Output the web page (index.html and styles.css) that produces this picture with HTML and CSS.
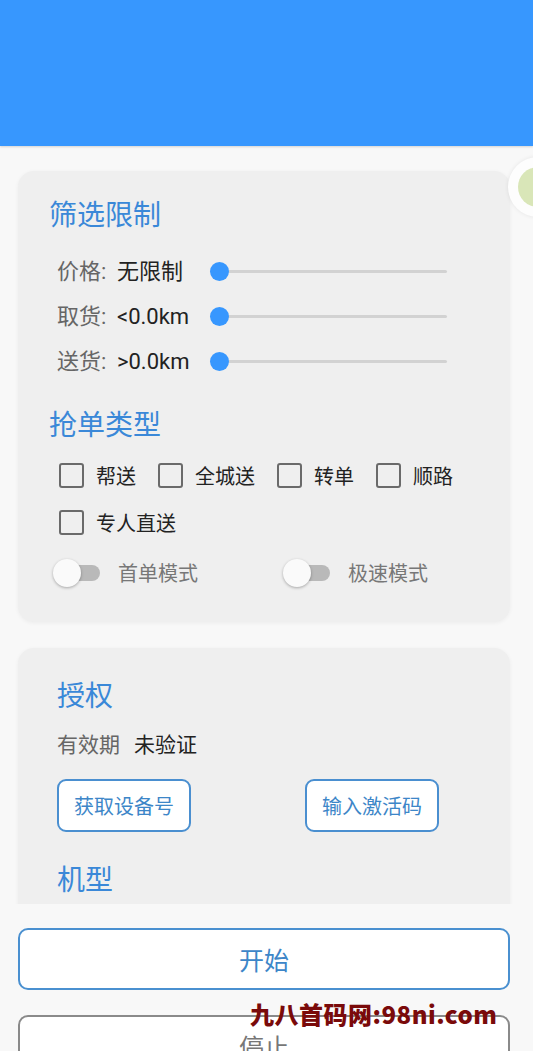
FILE: index.html
```html
<!DOCTYPE html>
<html lang="zh-CN">
<head>
    <meta charset="UTF-8">
    <meta name="viewport" content="width=device-width, initial-scale=1.0">
    <title>抢单助手</title>
    <link rel="stylesheet" href="styles.css">
</head>
<body>
    <div class="page">
        <div class="header"></div>

        <div class="content">
            <div class="card filter-card">
                <h2 class="title">筛选限制</h2>
                <div class="range-row">
                    <span class="range-label">价格:</span>
                    <span class="range-value">无限制</span>
                    <div class="slider"><span class="thumb"></span></div>
                </div>
                <div class="range-row">
                    <span class="range-label">取货:</span>
                    <span class="range-value">&lt;0.0km</span>
                    <div class="slider"><span class="thumb"></span></div>
                </div>
                <div class="range-row">
                    <span class="range-label">送货:</span>
                    <span class="range-value">&gt;0.0km</span>
                    <div class="slider"><span class="thumb"></span></div>
                </div>

                <h2 class="title type-title">抢单类型</h2>
                <div class="checks">
                    <label class="check"><span class="box"></span>帮送</label>
                    <label class="check"><span class="box"></span>全城送</label>
                    <label class="check"><span class="box"></span>转单</label>
                    <label class="check"><span class="box"></span>顺路</label>
                    <label class="check"><span class="box"></span>专人直送</label>
                </div>

                <div class="switches">
                    <div class="switch-item">
                        <span class="switch"><span class="knob"></span></span>
                        <span class="switch-label">首单模式</span>
                    </div>
                    <div class="switch-item">
                        <span class="switch"><span class="knob"></span></span>
                        <span class="switch-label">极速模式</span>
                    </div>
                </div>
            </div>

            <div class="card auth-card">
                <h2 class="title">授权</h2>
                <div class="expire">
                    <span class="expire-label">有效期</span>
                    <span class="expire-value">未验证</span>
                </div>
                <div class="auth-buttons">
                    <button class="outline-btn">获取设备号</button>
                    <button class="outline-btn">输入激活码</button>
                </div>
                <h2 class="title model-title">机型</h2>
            </div>

            <div class="float-ball"><span class="ball-inner"></span></div>
        </div>

        <div class="footer">
            <button class="big-btn start">开始</button>
            <button class="big-btn stop">停止</button>
            <div class="watermark">九八首码网:98ni.com</div>
        </div>
    </div>
</body>
</html>
```

FILE: styles.css
```css
* {
    box-sizing: border-box;
}
body {
    margin: 0;
    background: #f8f8f8;
    font-family: Roboto, "Noto Sans CJK SC", sans-serif;
    color: #222;
}
.page {
    height: 1051px;
    display: flex;
    flex-direction: column;
    overflow: hidden;
}
.header {
    height: 146px;
    flex-shrink: 0;
    background: #3797fe;
    box-shadow: 0 1px 2px rgba(0, 0, 0, 0.15);
}
.content {
    position: relative;
    height: 758px;
    flex-shrink: 0;
    overflow: hidden;
    padding: 25px 23px 0 18px;
}
.card {
    background: #efefef;
    border-radius: 16px;
    box-shadow: 0 1px 4px rgba(0, 0, 0, 0.05);
}
.filter-card {
    height: 451px;
    padding: 26px 20px 0 31px;
}
.title {
    margin: 0;
    font-size: 28px;
    font-weight: 400;
    line-height: 38px;
    color: #3a88d8;
}
.range-row {
    display: flex;
    align-items: center;
    height: 45px;
    padding-left: 8px;
    font-size: 22px;
}
.filter-card .title + .range-row {
    margin-top: 14px;
}
.range-label,
.range-value {
    display: block;
    height: 45px;
    line-height: 45px;
}
.range-label {
    width: 60px;
    color: #666;
}
.range-value {
    width: 93px;
    color: #222;
}
.slider {
    position: relative;
    width: 237px;
    height: 3px;
    background: #d2d2d2;
    border-radius: 2px;
}
.thumb {
    position: absolute;
    left: 0;
    top: -8px;
    width: 19px;
    height: 19px;
    border-radius: 50%;
    background: #3797fe;
}
.type-title {
    margin-top: 23px;
}
.checks {
    display: flex;
    flex-wrap: wrap;
    padding-left: 10px;
    margin-top: 7px;
    width: 450px;
}
.check {
    display: flex;
    align-items: center;
    height: 47px;
    margin-right: 22px;
    font-size: 20px;
    color: #222;
}
.box {
    width: 25px;
    height: 25px;
    margin-right: 12px;
    border: 2.5px solid #6a6a6a;
    border-radius: 3px;
}
.switches {
    display: flex;
    align-items: center;
    margin-top: 12px;
    padding-left: 4px;
}
.switch-item {
    display: flex;
    align-items: center;
    flex-shrink: 0;
    width: 230px;
}
.switch {
    position: relative;
    width: 47px;
    height: 28px;
    margin-right: 18px;
}
.switch::before {
    content: "";
    position: absolute;
    left: 8px;
    top: 6px;
    width: 39px;
    height: 16px;
    border-radius: 8px;
    background: #b9b9b9;
}
.knob {
    position: absolute;
    left: 0;
    top: 0;
    width: 28px;
    height: 28px;
    border-radius: 50%;
    background: #fafafa;
    box-shadow: 0 1px 3px rgba(0, 0, 0, 0.3);
}
.switch-label {
    font-size: 20px;
    color: #777;
}
.auth-card {
    margin-top: 26px;
    height: 300px;
    padding: 30px 20px 0 39px;
}
.expire {
    display: flex;
    align-items: center;
    margin-top: 13px;
    font-size: 21px;
    line-height: 32px;
}
.expire-label {
    color: #666;
    margin-right: 14px;
}
.expire-value {
    color: #222;
}
.auth-buttons {
    display: flex;
    gap: 114px;
    margin-top: 18px;
}
.outline-btn {
    width: 134px;
    height: 53px;
    background: #fff;
    border: 2px solid #4a8fd0;
    border-radius: 9px;
    font-family: Roboto, "Noto Sans CJK SC", sans-serif;
    font-size: 20px;
    color: #3d86c8;
    padding: 0;
}
.model-title {
    margin-top: 30px;
}
.float-ball {
    position: absolute;
    right: -35px;
    top: 11px;
    width: 60px;
    height: 60px;
    border-radius: 50%;
    background: #fdfdfd;
    box-shadow: 0 0 4px rgba(0, 0, 0, 0.08);
    display: flex;
    align-items: center;
    justify-content: center;
}
.ball-inner {
    width: 40px;
    height: 40px;
    border-radius: 50%;
    background: #d9e6b8;
}
.footer {
    position: relative;
    flex: 1;
    background: #f8f8f8;
    padding: 24px 23px 0 18px;
    display: flex;
    flex-direction: column;
    gap: 25px;
}
.big-btn {
    flex-shrink: 0;
    width: 492px;
    height: 62px;
    background: #fff;
    border-radius: 10px;
    font-family: Roboto, "Noto Sans CJK SC", sans-serif;
    font-size: 25px;
    padding: 0;
}
.start {
    border: 2px solid #4a90d0;
    color: #3d86c8;
}
.stop {
    border: 2px solid #8a8a8a;
    color: #777;
}
.watermark {
    position: absolute;
    left: 250px;
    top: 92px;
    font-family: "Noto Sans CJK SC", sans-serif;
    font-size: 24px;
    font-weight: 900;
    letter-spacing: 0.5px;
    color: #7a0a0a;
    white-space: nowrap;
}
```
